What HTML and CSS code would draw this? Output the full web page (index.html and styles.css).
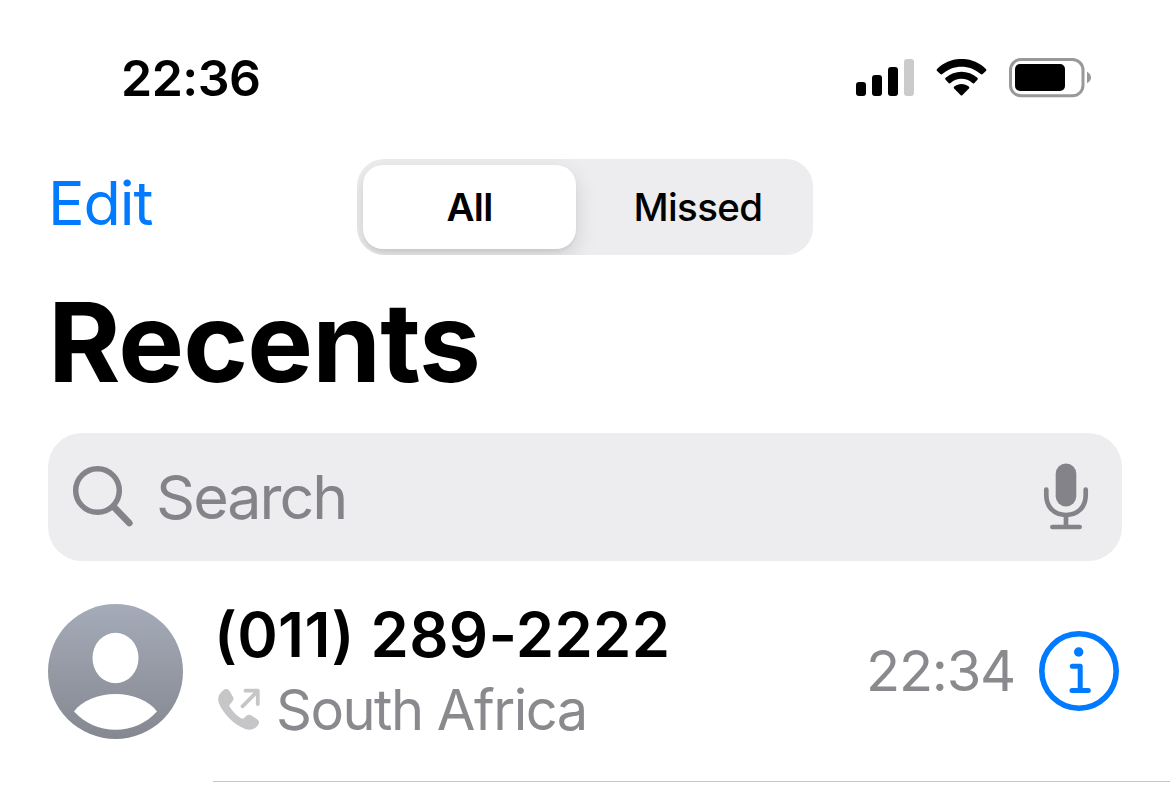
FILE: index.html
```html
<!DOCTYPE html>
<html lang="en">
<head>
<meta charset="utf-8">
<title>Recents</title>
<link rel="stylesheet" href="styles.css">
</head>
<body>
<div class="status-bar">
  <span class="clock">22:36</span>
  <div class="status-icons">
    <svg class="signal" width="58" height="38" viewBox="0 0 58 38">
      <rect x="0" y="23" width="10" height="14" rx="3"/>
      <rect x="16" y="16" width="10" height="21" rx="3"/>
      <rect x="32" y="8" width="10" height="29" rx="3"/>
      <rect x="48" y="0" width="10" height="37" rx="3" fill="#cbcbcb"/>
    </svg>
    <svg class="wifi" width="52" height="38" viewBox="0.5 0 52 38">
      <path d="M1.6 11.9Q.6 11 1.6 10C15-3.4 37-3.4 50.4 10Q51.4 11 50.4 11.9L47.2 15.1Q46.2 16 45.2 15.1C34.5 5.2 17.5 5.2 6.800 15.100Q5.800 16 4.800 15.100Z"/>
      <path d="M9.900 20.600Q9.200 19.700 10.100 18.800C19 10.800 33 10.800 41.900 18.800Q42.800 19.700 42.100 20.600L38.900 23.900Q37.900 24.900 36.900 24C30.500 18.400 21.500 18.400 15.100 24Q14.100 24.900 13.100 23.900Z"/>
      <path d="M18.600 29.500Q17.700 28.500 18.700 27.600C23 24.200 29 24.200 33.300 27.600Q34.300 28.500 33.400 29.500L27 36.100Q26 37.100 25 36.100Z"/>
    </svg>
    <svg class="battery" width="82" height="40" viewBox="0 0.5 82 40">
      <rect x="1.5" y="2" width="72.5" height="36.300" rx="10.500" fill="none" stroke="#999" stroke-width="3"/>
      <rect x="6" y="6.500" width="50" height="27" rx="5"/>
      <path d="M78 14.200Q82 16.500 82 20T78 25.800Z" fill="#999"/>
    </svg>
  </div>
</div>

<nav class="nav-bar">
  <a class="edit">Edit</a>
  <div class="segments">
    <span class="segment selected">All</span>
    <span class="segment">Missed</span>
  </div>
</nav>

<h1 class="title">Recents</h1>

<div class="search">
  <svg width="62" height="62" viewBox="0 1.500 62 62" fill="none" stroke="#848389" overflow="visible">
    <circle cx="25.500" cy="26" r="21.800" stroke-width="5.500"/>
    <path d="M41.500 42.200L57.300 58.500" stroke-width="6.700" stroke-linecap="round"/>
  </svg>
  <span class="placeholder">Search</span>
  <svg width="46" height="67" viewBox="0 1.500 46 67" fill="none" stroke="#848389" stroke-width="4.700" stroke-linecap="round" overflow="visible">
    <rect x="12.700" y="1" width="20.600" height="43" rx="10.300" fill="#848389" stroke="none"/>
    <path d="M3.300 27V32.500C3.300 45 11.500 52.500 23 52.500S42.700 45 42.700 32.500V27M23 52.500V64M9.400 64.500H36.600"/>
  </svg>
</div>

<div class="call">
  <svg class="avatar" width="135" height="135" viewBox="0 0 135 135">
    <defs>
      <linearGradient id="shade" x1="0" y1="0" x2="0" y2="1">
        <stop offset="0" stop-color="#a5abb9"/>
        <stop offset="1" stop-color="#858890"/>
      </linearGradient>
    </defs>
    <circle cx="67.500" cy="67.500" r="67.500" fill="url(#shade)"/>
    <ellipse cx="67.500" cy="54" rx="23" ry="25.300" fill="#fff"/>
    <path d="M26 107.500C34 96.500 50 90 67.500 90S101 96.500 109 107.500C98.500 119 84 125.700 67.500 125.700S36.500 119 26 107.500Z" fill="#fff"/>
  </svg>
  <div class="details">
    <span class="number">(011) 289-2222</span>
    <div class="origin">
      <svg width="44" height="44" viewBox="0.500 0 44 44" fill="#c6c6c8" overflow="visible">
        <path d="M5.500 2.500C8 .4 10.300 .7 12 3L15.300 8.500C16.500 10.800 16 12.500 14.300 14.200L12.500 16.200C11.600 17.300 11.800 18.200 12.500 19.300C15 23.300 19 27.500 23.500 30.300C24.700 31 25.600 31 26.600 30L28.400 28.200C30 26.600 32 26.300 34 27.400L39.600 31.200C42.200 33 42.200 35.300 40 37.700C36.500 41.800 32.500 42.700 27 40.700C16.500 36.500 6 26 1.500 15.500C-.4 10.200 1.200 5.800 5.500 2.500Z"/>
        <path d="M25 18.300L40 3.300M28 2.700H40.300V16" fill="none" stroke="#c6c6c8" stroke-width="3.800" stroke-linecap="round" stroke-linejoin="round"/>
      </svg>
      <span class="place">South Africa</span>
    </div>
  </div>
  <span class="time">22:34</span>
  <svg class="info" width="80" height="80" viewBox="0 0 80 80" fill="none" stroke="#007aff" stroke-linecap="round" stroke-linejoin="round">
    <circle cx="40" cy="40" r="37.200" stroke-width="5.600"/>
    <circle cx="39.700" cy="21" r="4.700" fill="#007aff" stroke="none"/>
    <path d="M33.300 35.200H41.200V59.500M33 59.500H49.300" stroke-width="5"/>
  </svg>
</div>
<div class="divider"></div>
</body>
</html>
```
FILE: styles.css
```css
* { box-sizing: border-box; }

body {
  margin: 0;
  width: 1170px;
  height: 806px;
  overflow: hidden;
  background: #fff;
  color: #000;
  font-family: Inter, "Liberation Sans", sans-serif;
  white-space: nowrap;
}

svg { display: block; flex: none; }

.status-bar {
  display: flex;
  justify-content: space-between;
  align-items: center;
  height: 159px;
  padding: 0 79px 4px 121px;
}

.clock {
  font-size: 50px;
  font-weight: 600;
  letter-spacing: -0.5px;
}

.status-icons { display: flex; align-items: center; }
.wifi { margin-left: 22px; }
.battery { margin-left: 21px; }

.nav-bar {
  display: flex;
  height: 96px;
  padding-left: 48px;
}

.edit {
  width: 309px;
  line-height: 88px;
  font-size: 61px;
  color: #007aff;
  letter-spacing: -1.1px;
}

.segments {
  display: flex;
  width: 456px;
  padding: 6px;
  border-radius: 27px;
  background: #ededef;
  overflow: hidden;
}

.segment {
  flex: 1;
  margin-left: 13px;
  border-radius: 20px;
  line-height: 85px;
  text-align: center;
  font-size: 38.5px;
  font-weight: 450;
  letter-spacing: -0.65px;
}

.selected {
  flex: none;
  width: 213px;
  margin-left: 0;
  background: #fff;
  font-weight: 600;
  box-shadow: 0 8px 22px rgba(0, 0, 0, 0.13), 0 3px 3px rgba(0, 0, 0, 0.05);
}

.title {
  margin: 0;
  height: 178px;
  padding-left: 48px;
  line-height: 174px;
  font-size: 110.5px;
  font-weight: 700;
  letter-spacing: -0.9px;
}

.search {
  display: flex;
  align-items: center;
  height: 128px;
  margin: 0 48px;
  padding: 0 33px 0 24px;
  border-radius: 34px;
  background: #ededef;
  color: #848389;
}

.placeholder {
  flex: 1;
  margin-left: 22px;
  font-size: 61px;
  letter-spacing: -2px;
}

.call {
  display: flex;
  align-items: center;
  height: 220px;
  padding: 0 51px 0 48px;
}

.details {
  display: flex;
  flex-direction: column;
  flex: 1;
  margin: 2px 0 0 35px;
}

.number {
  margin-left: -4px;
  line-height: 75px;
  font-size: 61.5px;
  font-weight: 600;
  letter-spacing: 0.3px;
}

.origin {
  display: flex;
  align-items: center;
  height: 75px;
  color: #8a8a8e;
}

.place {
  margin-left: 14px;
  font-size: 56px;
  letter-spacing: -1.5px;
}

.time {
  font-size: 56px;
  color: #8a8a8e;
  letter-spacing: -1.25px;
}

.info { margin-left: 24px; }

.divider {
  height: 1px;
  margin-left: 213px;
  background: #c6c6c8;
}
```
